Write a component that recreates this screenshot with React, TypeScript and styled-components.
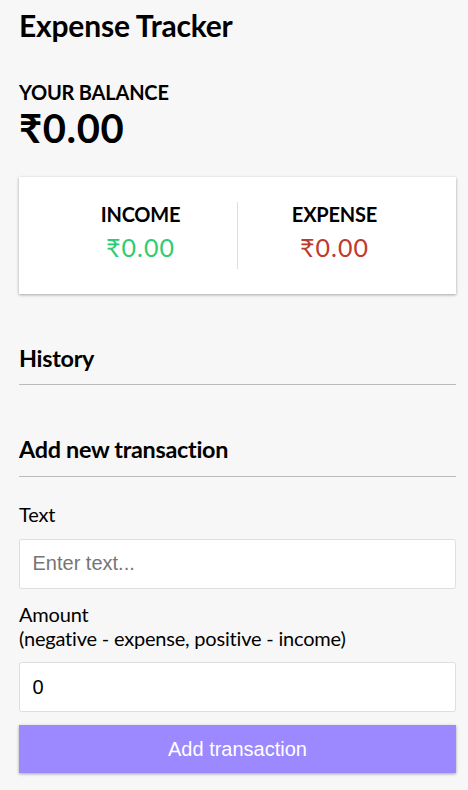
import React, { useState } from "react"
import styled, { createGlobalStyle } from "styled-components"

const shadow = "0 1px 3.75px rgba(0, 0, 0, 0.12), 0 1px 2.5px rgba(0, 0, 0, 0.24)"

const GlobalStyle = createGlobalStyle`
    * {
        box-sizing: border-box;
    }
    body {
        margin: 0;
        background-color: #f7f7f7;
        font-family: Lato, "Noto Sans", sans-serif;
        font-size: 20px;
        letter-spacing: -0.2px;
        color: #000;
    }
`

const Container = styled.div`
    width: 437px;
    margin-left: 19px;
    padding-top: 7px;
`

const Title = styled.h2`
    margin: 0 0 37px;
    font-size: 30px;
    font-weight: 700;
    line-height: 36px;
`

const Label4 = styled.h4`
    margin: 0;
    font-size: 20px;
    font-weight: 700;
    line-height: 24px;
    text-transform: uppercase;
`

const Balance = styled.h1`
    margin: 0;
    font-size: 40px;
    font-weight: 700;
    line-height: 48px;
    letter-spacing: 0.6px;
`

const IncExpCard = styled.div`
    display: flex;
    justify-content: space-between;
    margin: 25px 0;
    padding: 25px;
    background-color: #fff;
    box-shadow: ${shadow};
`

const IncExpColumn = styled.div<{ divider?: boolean }>`
    flex: 1;
    text-align: center;
    border-right: ${(p) => (p.divider ? "1px solid #dedede" : "none")};
`

const Money = styled.p<{ kind: "plus" | "minus" }>`
    margin: 6.25px 0;
    font-size: 25px;
    line-height: 30px;
    letter-spacing: 1px;
    color: ${(p) => (p.kind === "plus" ? "#2ecc71" : "#c0392b")};
`

const SectionTitle = styled.h3`
    margin: 50px 0 12.5px;
    padding-bottom: 12.5px;
    font-size: 23.4px;
    font-weight: 700;
    line-height: 28px;
    letter-spacing: -0.3px;
    border-bottom: 1px solid #bbb;
`

const List = styled.ul`
    list-style-type: none;
    padding: 0;
    margin: 20px 0 50px;
`

const FormControl = styled.div``

const Label = styled.label`
    display: inline-block;
    margin: 13px 0 12.5px;
    line-height: 24px;
`

const Input = styled.input`
    display: block;
    width: 100%;
    padding: 12.5px;
    border: 1px solid #dedede;
    border-radius: 2.5px;
    font-family: "Liberation Sans", Arial, sans-serif;
    font-size: 20px;
    line-height: 23px;
    letter-spacing: 0;
    color: #000;
    background: #fff;
    outline: none;

    &::placeholder {
        color: #757575;
    }
`

const Button = styled.button`
    display: block;
    width: 100%;
    margin: 13px 0 37.5px;
    padding: 12.5px;
    border: 0;
    cursor: pointer;
    background-color: #9c88ff;
    box-shadow: ${shadow};
    color: #fff;
    font-family: "Liberation Sans", Arial, sans-serif;
    font-size: 20px;
    line-height: 23px;
    letter-spacing: 0;
`

const App = () => {
    const [text, setText] = useState("")
    const [amount, setAmount] = useState("0")

    return (
        <>
            <GlobalStyle />
            <Container>
                <Title>Expense Tracker</Title>
                <Label4>Your Balance</Label4>
                <Balance>₹0.00</Balance>
                <IncExpCard>
                    <IncExpColumn divider>
                        <Label4>Income</Label4>
                        <Money kind="plus">₹0.00</Money>
                    </IncExpColumn>
                    <IncExpColumn>
                        <Label4>Expense</Label4>
                        <Money kind="minus">₹0.00</Money>
                    </IncExpColumn>
                </IncExpCard>
                <SectionTitle>History</SectionTitle>
                <List />
                <SectionTitle>Add new transaction</SectionTitle>
                <form onSubmit={(e) => e.preventDefault()}>
                    <FormControl>
                        <Label htmlFor="text">Text</Label>
                        <Input
                            type="text"
                            id="text"
                            placeholder="Enter text..."
                            value={text}
                            onChange={(e) => setText(e.target.value)}
                        />
                    </FormControl>
                    <FormControl>
                        <Label htmlFor="amount">
                            Amount
                            <br />
                            (negative - expense, positive - income)
                        </Label>
                        <Input
                            type="number"
                            id="amount"
                            value={amount}
                            onChange={(e) => setAmount(e.target.value)}
                        />
                    </FormControl>
                    <Button type="submit">Add transaction</Button>
                </form>
            </Container>
        </>
    )
}

export default App
